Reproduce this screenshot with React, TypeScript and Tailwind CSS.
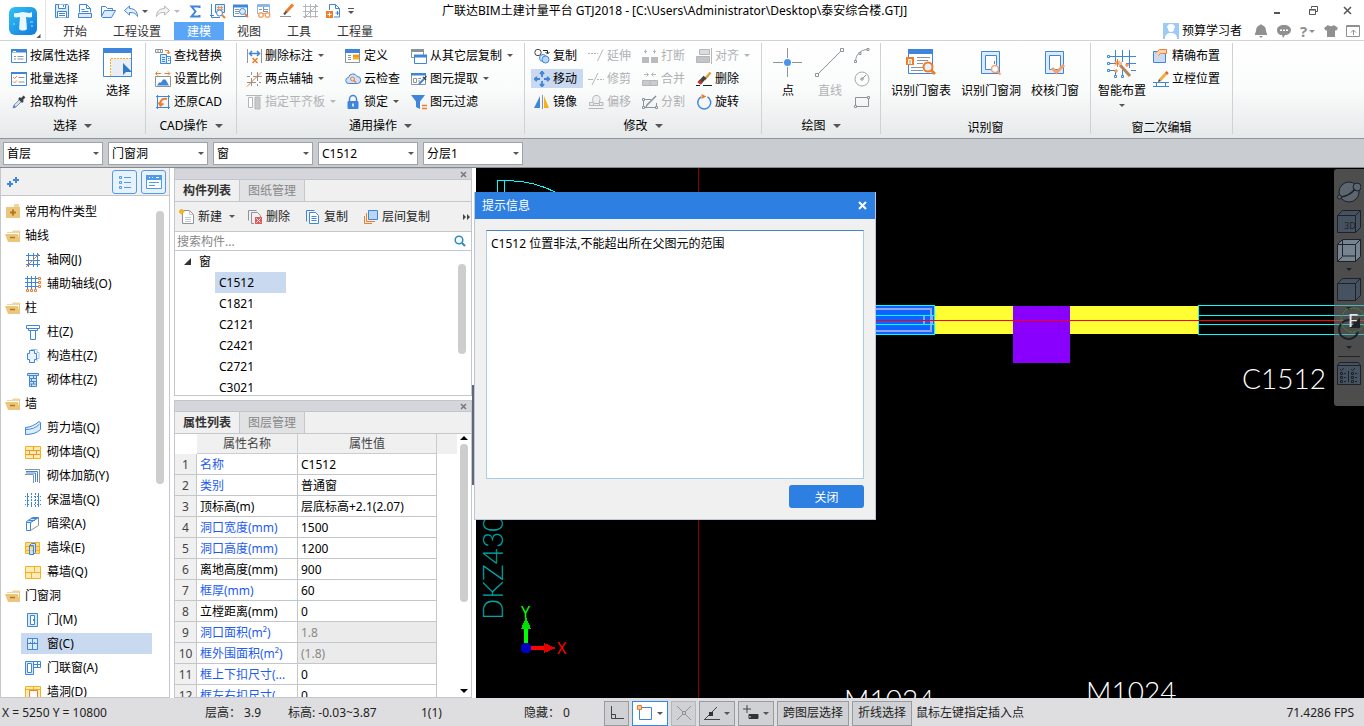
import React, { useState } from 'react';
import type { ReactNode } from 'react';
import { clsx } from 'clsx';

const B = '#3f86da';
const O = '#f07d2a';
const Y = '#f5b21a';
const G = '#8b949b';
const L = '#b4b7ba';

const icons: Record<string, ReactNode> = {
  // quick access bar
  save: (
    <g stroke={B}>
      <path d="M1.5 1.5h12l1 1v12h-13z" fill="#dcebfc" />
      <path d="M4.5 1.5v4h7v-4M9.5 2v2M3.5 14.5v-6h9v6M5 10.5h6M5 12.5h6" fill="#fff" />
    </g>
  ),
  sheet: (
    <g stroke={B}>
      <path d="M2.5 9.5v-8h7l4 4v4" />
      <path d="M9.5 1.5v4h4M4.5 6.5h3M4.5 8.5h7" />
      <path d="M1.5 10.5h13v4h-13z" fill="#dcebfc" />
    </g>
  ),
  open: (
    <g stroke={B}>
      <path d="M1.5 13.5v-10h4l2 2h5v2" />
      <path d="M1.5 13.5l3-6h11l-4 7h-9z" fill="#dcebfc" />
    </g>
  ),
  undo: <path d="M6.500 3L1.500 7.500l5 4.500V9.500c4 0 6 .5 8 4 0-5-3-8-8-8z" stroke={B} fill="#e6f0fd" />,
  redo: <path d="M9.500 3l5 4.500-5 4.500V9.500c-4 0-6 .5-8 4 0-5 3-8 8-8z" stroke="#b5b5b5" fill="#f3f3f3" />,
  sigma: <path d="M12.500 5V3.500h-8l4 5-4 5h8V12" stroke={B} strokeWidth="2" />,
  drawFind: (
    <g stroke={B}>
      <path d="M1.500 1v13.500H10M0 12.500h4" />
      <path d="M5.500 1.500h9v8h-9z" fill="#dcebfc" />
      <path d="M7 4.500h6M7 6.500h6M8.500 3v5M11.500 3v5" stroke="#e39a66" />
      <circle cx="9.500" cy="10" r="3" fill="#fff" />
      <path d="M12 12l3 3" stroke={O} strokeWidth="2" />
    </g>
  ),
  tableFind: (
    <g stroke={B}>
      <path d="M.5 2.500h14v11H.5z" fill="#fff" />
      <path d="M0 3h15" strokeWidth="3" />
      <path d="M2 6.500h4M2 8.500h4M2 10.500h4" stroke={G} />
      <circle cx="9.500" cy="8.500" r="3" fill="#dcebfc" />
      <path d="M12 11l3 3" stroke={O} strokeWidth="2" />
    </g>
  ),
  tableView: (
    <g stroke="#8cb7ea">
      <path d="M1.500 1.500h12v9h-12z" fill="#fff" />
      <path d="M1 3h13" strokeWidth="2" />
      <path d="M3 6.500h3M8 6.500h4M8 8.500h4M7.500 4v5" stroke={G} />
      <circle cx="5" cy="12" r="2.300" stroke="#f4a56c" strokeWidth="1.500" fill="#fff" />
      <circle cx="11.500" cy="12" r="2.300" stroke="#f4a56c" strokeWidth="1.500" fill="#fff" />
    </g>
  ),
  brush: (
    <g>
      <path d="M14 1.500L7 9" stroke={O} strokeWidth="3" />
      <path d="M7.500 8.500L5 11.500" stroke="#555" strokeWidth="2" />
      <path d="M1 13.500h11" stroke={G} />
    </g>
  ),
  gridGray: (
    <g stroke={L}>
      <path d="M3.500 1v14M8.500 1v14M13.500 1v14M1 3.500h15M1 8.500h15M1 13.500h15M2 15L15 2" />
    </g>
  ),
  docPlus: (
    <g stroke={B}>
      <path d="M4.500 7v-5.500h6l4 4v8.500H9" fill="#fff" />
      <path d="M10.500 1.500v4h4" />
      <path d="M1 8h7v7H1z" fill={O} stroke="none" />
      <path d="M4.500 9.500v4M2.500 11.500h4" stroke="#fff" />
      <path d="M12.500 8v4M10.500 10h4" />
    </g>
  ),
  // ribbon, 选择
  byProp: (
    <g stroke={B}>
      <path d="M.5 1.500h15v13H.5z" fill="#fff" />
      <path d="M0 3h16" strokeWidth="3" />
      <path d="M2 3.500h3" stroke="#fff" />
      <path d="M3 8.500h2M6.500 8.500h6M3 11h2M6.500 11h6" stroke={G} />
    </g>
  ),
  batch: (
    <g stroke={B}>
      <path d="M.5 1.500h15v13H.5z" fill="#fff" />
      <path d="M0 2h16" strokeWidth="2" />
      <path d="M7.500 6.500h6M7.500 11h6" stroke={G} />
      <path d="M2 6l1.500 1.500L6 5M2 10.500L3.500 12 6 9.500" stroke={O} />
    </g>
  ),
  dropper: (
    <g>
      <path d="M2 14l1-3 6-6 2 2-6 6z" fill="#cfe2f7" stroke={G} />
      <path d="M2 14l1-3 2 2z" fill={B} />
      <path d="M8 4l4 4M10 6l3.500-3.500" stroke="#3d4348" strokeWidth="2.500" />
    </g>
  ),
  replace: (
    <g stroke={B}>
      <path d="M.5 1.500h7v3h-7zM3 1.500v3M5.500 1.500v3" stroke={G} />
      <path d="M10 2.500h3.500V5M12 4l1.500 2L15 4" stroke={O} />
      <path d="M5.500 6.500h6v9h-6z" fill="#dcebfc" />
      <path d="M11.500 8.500h4v7h-4M7 9.500h3M7 11.500h3M7 13.500h3M13 10.500h1.500M13 12.500h1.500" />
    </g>
  ),
  ratio: (
    <g>
      <path d="M1 2.500h5M2.500.5l-2 2 2 2M9.500 2.500h5M13 .5l2 2-2 2" stroke={O} />
      <path d="M.5 5.500h15v10H.5z" stroke={G} fill="#fff" />
      <path d="M2 14.500l2-3 2 0 2-3 2.500 0 3.500 6z" fill={B} />
    </g>
  ),
  restore: (
    <g stroke={B}>
      <path d="M2.500 1v14M13.500 1v14M1 2.500h14M1 13.500h14" />
      <path d="M12 5c-4-1-7 1-6.500 5M3.500 8.500l2 3 3-2" stroke={O} strokeWidth="2" />
    </g>
  ),
  // ribbon, 通用操作
  delDim: (
    <g stroke={B}>
      <path d="M1.500 1v14M15.500 1v14" stroke={G} />
      <path d="M4 5.500h9M6 3L3.500 5.500 6 8M11 3l2.500 2.500L11 8" strokeWidth="1.500" />
      <path d="M6.500 10l5 5M11.500 10l-5 5" stroke={O} strokeWidth="1.500" />
    </g>
  ),
  twoPoint: (
    <g stroke={G}>
      <path d="M5.500 1v14M11.500 1v14M1 5.500h15M1 11.500h14" />
      <path d="M4 4h3v3H4zM10 10h3v3h-3z" fill="#fff" stroke="none" />
      <path d="M1 15.500L15 1.500" stroke={O} />
    </g>
  ),
  flush: (
    <g stroke={L}>
      <path d="M0 1.500h16" />
      <path d="M2.500 3.500h4v10h-4z" fill="#fff" />
      <path d="M9 3h5v12H9z" fill="#c6c8ca" />
    </g>
  ),
  define: (
    <g>
      <path d="M.5 2.500h14v12H.5z" stroke={G} fill="#fff" />
      <path d="M0 1h15v4H0z" fill={B} />
      <path d="M3 7.500h3M3 9.500h3M3 11.500h3" stroke={G} />
      <path d="M8 6.500h6v5H8z" fill={Y} />
      <path d="M8 8h6" stroke={O} />
    </g>
  ),
  cloud: (
    <g>
      <path d="M4 12.500a3 3 0 0 1-.5-6 4.500 4.500 0 0 1 8.500-1 3.500 3.500 0 0 1 .5 7z" fill="#cfe2f8" stroke={B} />
      <circle cx="7.500" cy="8" r="2" stroke={O} />
      <path d="M9 9.500l2 2" stroke={O} strokeWidth="1.500" />
    </g>
  ),
  lock: (
    <g>
      <path d="M4.500 8V5a3.500 3.500 0 0 1 7 0v3" stroke={B} strokeWidth="1.500" />
      <rect x="2.500" y="7" width="11" height="8" rx="1" fill={B} />
      <path d="M8 9.500v3" stroke="#fff" strokeWidth="1.500" />
    </g>
  ),
  fromFloor: (
    <g>
      <path d="M.5 1.500h12v8H.5z" stroke={G} fill="#fff" />
      <path d="M0 1h13v3H0z" fill={G} />
      <path d="M3.500 7.500h12v8h-12z" stroke={B} fill="#fff" />
      <path d="M3 6.500h13v3H3z" fill={B} />
    </g>
  ),
  extract: (
    <g>
      <path d="M.5 2.500h14v11H.5z" stroke={G} fill="#fff" />
      <path d="M0 2h15v2.500H0z" fill={B} />
      <path d="M2.500 7.500h3v4h-3zM7 7.500h3M7 10h2" stroke={G} />
      <path d="M8 13l5-5" stroke={B} strokeWidth="2" />
      <path d="M12 6l3 3M13.500 7.500L15.500 5" stroke="#3d4348" strokeWidth="1.500" />
    </g>
  ),
  filter: (
    <g>
      <path d="M0 1h14L9 7.500V15l-4-2V7.500z" fill={B} />
      <path d="M11 11.500h5M11 14.500h5" stroke={O} strokeWidth="1.500" />
    </g>
  ),
  // ribbon, 修改
  copy2: (
    <g>
      <circle cx="4" cy="4.500" r="3.200" stroke="#444" />
      <path d="M9 2.500h4.500V5M11.500 4l2 2 2-2" stroke="#222" />
      <circle cx="9" cy="10" r="3.500" stroke={B} fill="#dcebfc" />
      <circle cx="11.500" cy="11.500" r="3.500" stroke={B} fill="#b9d8f8" />
    </g>
  ),
  move: (
    <path
      d="M8 1v5M8 10v5M1 8h5M10 8h5M6 3l2-2.500L10 3M6 13l2 2.500 2-2.500M3 6L.5 8 3 10M13 6l2.500 2-2.500 2"
      stroke={B}
      strokeWidth="1.800"
    />
  ),
  mirror: (
    <g>
      <path d="M6 2v12H0z" fill={B} />
      <path d="M8.500 1v14" stroke={G} />
      <path d="M10 2v12h5z" fill={Y} />
    </g>
  ),
  extend: (
    <g stroke={L}>
      <path d="M0 5.500h10" strokeDasharray="2 1" />
      <path d="M9.500 13L15 1.500" />
    </g>
  ),
  trim: (
    <g stroke={L}>
      <path d="M0 8.500h5M4 14L10 2" />
      <path d="M9 8.500h7" strokeDasharray="2 1" />
    </g>
  ),
  offset: (
    <g stroke={L}>
      <path d="M1.500 11.500v-3h4C3 4 6 1 9 1.500s4 3 2 7h4v3z" fill="#efefef" />
      <path d="M.5 14.500h15M5.500 11V9.500h6V11" />
    </g>
  ),
  cut: (
    <g stroke={L}>
      <path d="M3.500 1.500v4M2 3.500h3M12.500 1.500v4M11 3.500h3" />
      <path d="M0 9h7v6H0zM9 9h7v6H9z" fill="#b9bbbd" stroke="none" />
    </g>
  ),
  join: (
    <g stroke={L}>
      <path d="M2 3.500h4M4.500 1.500l2 2-2 2M10 3.500h4M11.500 1.500l-2 2 2 2" />
      <path d="M.5 9.500h15v5H.5z" fill="#c9cbcd" />
      <path d="M8 9v6" />
    </g>
  ),
  split: (
    <g stroke={G}>
      <path d="M1.500 14.500v-9H9M0 13.500h16M14.500 9v6" />
      <path d="M14 2L5 11l-1 2" strokeWidth="1.500" />
      <path d="M.5 4.500h2v2h-2zM.5 12.500h2v2h-2zM13.500 12.500h2v2h-2z" fill="#fff" />
    </g>
  ),
  align: (
    <g stroke={L}>
      <path d="M3.500 1.500h10v5h-10z" fill="#ddd" />
      <path d="M.5 8.500h13v6H.5z" fill="#c3c5c7" />
      <path d="M15.500 0v16" />
    </g>
  ),
  erase: (
    <g>
      <path d="M14.500 1.500l-6 7" stroke="#e29a3c" strokeWidth="2.500" />
      <path d="M9 6L3.500 12" stroke="#444" strokeWidth="4" />
      <path d="M5 10l-2 2.500" stroke="#c0392b" strokeWidth="4" />
      <path d="M0 14.500h4M7 14.500h9" stroke="#222" />
    </g>
  ),
  rotate: (
    <g>
      <path d="M5 2.800a6.500 6.500 0 1 0 6.500 0" stroke={B} strokeWidth="1.500" />
      <path d="M5.500 0v5l5-2.500z" fill={O} />
    </g>
  ),
  arc: (
    <g stroke={G}>
      <path d="M1.500 13C2 6 7 2 13 1.500" />
      <path d="M.5 12.500h2v2h-2zM5 4.500h2v2H5zM13 .5h2v2h-2z" fill="#fff" />
    </g>
  ),
  circle: (
    <g stroke={G}>
      <circle cx="8" cy="8" r="7" stroke="#a5a9ad" />
      <path d="M8 8l4-4" />
      <path d="M7 7h2v2H7z" fill="#fff" />
    </g>
  ),
  rect: (
    <g stroke={G}>
      <path d="M1.500 3.500h13v9h-13z" />
      <path d="M.5 11.500h2v2h-2zM13.500 2.500h2v2h-2z" fill="#fff" />
    </g>
  ),
  precise: (
    <g>
      <path d="M.5 3.500h12v11H.5z" stroke={B} fill="#c9daf2" />
      <path d="M2.500 5l4-3.500h7v4h-4l-2 0-2 2" fill="#fbd3b2" stroke={O} />
    </g>
  ),
  frame: (
    <g>
      <path d="M0 11.500h16M0 15.500h16M3.500 11v5M12.500 11v5" stroke={B} />
      <path d="M14.500 1L7 9" stroke="#f2ae3c" strokeWidth="3" />
      <path d="M6 8l2 2-3 1z" fill="#444" />
      <path d="M13 1l2 2" stroke="#e2584c" strokeWidth="2" />
    </g>
  ),
  // element tree
  folderPlus: (
    <g>
      <path d="M9 0h5v3H9z" fill="#f3d59a" />
      <path d="M1 3h14v11H1z" fill="#ecc67e" />
      <path d="M8 5.500v6M5 8.500h6" stroke="#b07b1c" strokeWidth="2" />
    </g>
  ),
  folder: (
    <g>
      <path d="M2 5h12V2.500H8L7 4H2z" fill="#f3d59a" />
      <path d="M14.500 3v11" stroke="#ecc67e" />
      <path d="M0 6h13l2 8H3z" fill="#ecc67e" />
      <path d="M5 9.500h5" stroke="#b07b1c" strokeWidth="1.500" />
    </g>
  ),
  axis: (
    <g stroke={B}>
      <path d="M3.500 1v14M8.500 1v14M12.500 1v14M1 3.500h14M1 8.500h14M1 12.500h14" />
      <path d="M1 15L14 2" stroke={O} />
    </g>
  ),
  auxAxis: (
    <g stroke={B}>
      <path d="M2.500 0v13M6.500 0v13M10.500 0v13M0 2.500h13M0 6.500h13M0 10.500h13" />
      <path
        d="M13.500 1.500h2v2h-2zM13.500 5.500h2v2h-2zM13.500 9.500h2v2h-2zM1.500 13.500h2v2h-2zM5.500 13.500h2v2h-2zM9.500 13.500h2v2h-2z"
        stroke={O}
        fill="#fff"
      />
    </g>
  ),
  column: <path d="M1.500 1.500h13v3h-13zM3.500 4.500v2h9v-2M5.500 6.500v9h5v-9" stroke={B} fill="#fff" />,
  conColumn: (
    <g stroke={B}>
      <path d="M6 1.500h6v3h2v6h-2v3" stroke="#9cc3ee" />
      <path d="M4.500 2.500h5v3h2v6h-2v3h-5v-3h-2v-6h2z" fill="#eaf3fd" />
    </g>
  ),
  brickColumn: (
    <g stroke={B}>
      <path d="M2.500 1.500h11v2h-11z" fill="#cfe2f8" />
      <path d="M4.500 3.500h7v11h-7z" fill="#cfe2f8" />
      <path d="M5 6.500h6M5 9.500h6M5 12h6M8.500 4v2M6.500 7v2M8.500 10v2M6.500 12v2" />
    </g>
  ),
  shearWall: (
    <path d="M.5 7.500C6 7 10 5 14 1.500l1.500 1v7C12 13 7 14.500.5 14.500zM.5 9.500c6 0 11-2 14-5.500" stroke={B} fill="#dcebfc" />
  ),
  brickWall: (
    <g stroke={Y}>
      <path d="M.5 2.500h15v12H.5z" fill="#fdeab8" />
      <path d="M1 6.500h14M1 10.500h14M8.500 3v3M4.500 7v3M11.500 7v3M8.500 11v3" stroke="#f09a1a" />
    </g>
  ),
  brickBar: (
    <g>
      <path d="M0 1.500h14.500V15M0 6.500h8.500V15" stroke={G} />
      <path d="M1 3.500h11.500V14M1 5h9.500v9" stroke={B} />
    </g>
  ),
  insulWall: (
    <g stroke={B}>
      <path d="M2.500 1v14M13.500 1v14" />
      <path d="M6.500 1v14M10.500 1v14" strokeDasharray="2 1" />
      <path d="M0 4.500h16M0 8.500h16M0 12.500h16" strokeDasharray="1 2" />
    </g>
  ),
  darkBeam: (
    <g stroke={B}>
      <path d="M5.500 6.500l8-5v8l-8 5z" fill="#fff" stroke={G} />
      <path d="M1.500 5.500l6-4h6l-8 5h-4z" fill="#cfe2f8" />
      <path d="M1.500 6.500h4v8h-4z" fill="#fff" />
      <path d="M4 4.500h6M6 2.500h6" />
    </g>
  ),
  pier: (
    <g>
      <path d="M.5 2.500h14v11H.5z" fill="#fdd98a" stroke={Y} />
      <path d="M1 6.500h14M1 10.500h14" stroke={Y} />
      <path d="M4.500 5.500h4v9h-4zM8.500 14.500l2-2v-9h-4l-2 2" stroke={B} fill="#cfe2f8" />
    </g>
  ),
  curtain: (
    <g stroke={Y}>
      <path d="M.5 2.500h15v12H.5z" fill="#fdeab8" />
      <path d="M1 8.500h14M9.500 3v5M6.500 9v5" />
    </g>
  ),
  door: (
    <g stroke={B}>
      <path d="M2.500 1.500h10v13h-10z" fill="#dcebfc" />
      <path d="M5.500 3.500h4v9h-4z" fill="#fff" />
      <path d="M8.500 7v2" />
    </g>
  ),
  window: (
    <g stroke={B}>
      <path d="M2.500 2.500h10v11h-10z" fill="#dcebfc" />
      <path d="M7.500 3v10M3 7.500h9M5 6.500h1M9 6.500h1" />
    </g>
  ),
  doorWindow: (
    <g stroke={B}>
      <path d="M.5 1.500h8v13h-8z" fill="#dcebfc" />
      <path d="M2.500 3.500h4v9h-4z" fill="#fff" />
      <path d="M8.500 1.500h7v6h-7zM12.500 2v5M9 4.500h6" />
    </g>
  ),
  wallHole: (
    <g stroke={Y}>
      <path d="M.5 2.500h15v13H.5z" fill="#fdeab8" />
      <path d="M1 5.500h14M8.500 3v2" />
      <path d="M4.500 6.500h8v9h-8z" stroke={O} fill="#fff" />
    </g>
  ),
  // component list bar
  newDoc: (
    <g>
      <path d="M3.500 1.500h7l4 4v9h-11z" stroke={G} fill="#fff" />
      <path d="M10.500 1.500v4h4M6 8.500h6M6 10.500h6M6 12.500h6" stroke="#c3c8cc" />
      <path d="M1 1h1v1H1zM3 1h1v1H3zM2 2h1v1H2zM1 3h1v1H1zM3 3h1v1H3zM0 2h1v1H0zM4 2h1v1H4zM2 0h1v1H2zM2 4h1v1H2z" stroke={Y} />
    </g>
  ),
  delDoc: (
    <g>
      <path d="M1.500 11.500v-10h8" stroke={G} />
      <path d="M4.500 14.500v-11h6l3 3v3M7 14.500H4.500" stroke={G} />
      <path d="M8 8h7v7H8z" fill="#e05a5a" />
      <path d="M9.500 9.500l4 4M13.500 9.500l-4 4" stroke="#fff" />
    </g>
  ),
  copyDoc: (
    <g stroke={B}>
      <path d="M1.500 12.500v-11h8" />
      <path d="M4.500 3.500h6l3 3v8h-9z" fill="#fff" />
      <path d="M6.500 7.500h5M6.500 9.500h5M6.500 11.500h5" />
    </g>
  ),
  layerCopy: (
    <g>
      <path d="M5.500 1.500h9v9h-9z" fill="#b9d5f8" stroke={B} />
      <path d="M3.500 4v8.500H12M1.500 7v7.500H9" stroke={O} />
    </g>
  ),
  // status bar
  ortho: <path d="M2.500 1v12.500H15M2.500 9.500h4v4" stroke="#444" />,
  snapRect: (
    <g>
      <path d="M2.500 2.500h12v12h-12z" stroke={B} />
      <path d="M.5 .5h4v4h-4z" fill="#f9c293" stroke={O} />
    </g>
  ),
  cross: (
    <g stroke="#8f9092">
      <path d="M1 1l14 14M15 1L1 15" />
      <path d="M6.500 6.500h3v3h-3z" fill="#ccc" />
    </g>
  ),
  angle: (
    <g>
      <path d="M0 14.500h16M1 14L13 2" stroke="#444" />
      <path d="M5 7h4v4H5z" fill="#333" />
    </g>
  ),
  inputXY: (
    <g>
      <path d="M4 0v8M0 4h8" stroke="#444" />
      <path d="M6 9.500h9v4H6z" fill="#333" stroke="#333" />
      <path d="M7 11v1.500" stroke="#fff" />
    </g>
  ),
};

const Icon = ({ name, size = 16 }: { name: string; size?: number }) => (
  <svg width={size} height={size} viewBox="0 0 16 16" fill="none" className="shrink-0" aria-hidden="true">
    {icons[name]}
  </svg>
);

const bigIcons: Record<string, ReactNode> = {
  select: (
    <g>
      <path d="M.5.5h28v28H.5z" fill="#fff" stroke={B} />
      <path d="M0 0h29v5H0z" fill={B} />
      <path d="M8 11h20v17H8z" fill="#e9eef6" />
      <path d="M7.500 28V10.500H28" stroke={Y} strokeDasharray="2 1" />
      <path d="M20 15v12l3-3h6z" fill="#2f79c9" />
    </g>
  ),
  point: (
    <g>
      <path d="M14.500 0v29M0 14.500h29" stroke={G} />
      <circle cx="14.500" cy="14.500" r="4.500" fill="#fff" />
      <circle cx="14.500" cy="14.500" r="3.500" fill="#4a94ec" />
    </g>
  ),
  line: (
    <g stroke={G}>
      <path d="M3 26L26 3" />
      <path d="M.5 25.500h3v3h-3zM25.500.5h3v3h-3z" fill="#fff" />
    </g>
  ),
  winTable: (
    <g>
      <path d="M2.500 1.500h24v24h-24z" fill="#fff" stroke={B} />
      <path d="M2 1h25v5H2z" fill={B} />
      <path d="M11 9.500h13M11 12.500h11M11 15.500h6M5 19.500h12M5 22.500h12" stroke={G} />
      <path d="M0 9h8v8H0z" fill={O} />
      <path d="M2.500 16v-4.500h3V16M4 12v4" stroke="#fff" />
      <circle cx="22" cy="19" r="4.500" fill="#e9f1fb" stroke={O} strokeWidth="2" />
      <path d="M25.500 22.500l3.500 3.500" stroke={O} strokeWidth="3" />
    </g>
  ),
  winHole: (
    <g>
      <path d="M5.500 3.500h18v22h-18z" fill="#dcebfc" stroke={B} />
      <path d="M9.500 7.500h11v14h-11z" fill="#fff" stroke={B} />
      <path d="M18.500 13v3" stroke={B} />
      <circle cx="19" cy="21" r="3.500" fill="#fff" stroke="#f7a06a" strokeWidth="1.500" />
      <path d="M21.500 23.500l3 3" stroke="#f7a06a" strokeWidth="2" />
    </g>
  ),
  winCheck: (
    <g>
      <path d="M5.500 3.500h18v22h-18z" fill="#dcebfc" stroke={B} />
      <path d="M9.500 7.500h11v14h-11z" fill="#fff" stroke={B} />
      <path d="M12 20l4.500 4.500L24 17" stroke="#f7a06a" strokeWidth="3" />
    </g>
  ),
  smart: (
    <g>
      <path d="M8.500 2v12M15.500 2v12M22.500 2v18M3 8.500h26M3 15.500h6M3 22.500h5M19 15.500h10M24 22.500h5M8.500 24v3M15.500 22v5" stroke={B} />
      <path d="M.5 7.500h2v2h-2zM.5 14.500h2v2h-2zM.5 21.500h2v2h-2zM7.500 27.500h2v2h-2zM14.500 27.500h2v2h-2z" stroke={B} fill="#fff" />
      <path d="M13 17l10 11" stroke="#b9835a" strokeWidth="3" />
      <path d="M10.500 11v8M7 15h8M8 12.500l5 5M13 12.500l-5 5M20 15v4M18 17h4M9 21v4M7 23h4" stroke={O} />
    </g>
  ),
};

const Caret = ({ className = 'border-t-[#555]' }: { className?: string }) => (
  <span className={clsx('h-0 w-0 shrink-0 border-x-[3px] border-t-[3px] border-x-transparent', className)} />
);

function Tool({ icon, label, caret, off, active }: { icon: string; label: string; caret?: boolean; off?: boolean; active?: boolean }) {
  return (
    <button
      className={clsx(
        'my-[2px] flex h-[19px] w-max items-center gap-[3px] whitespace-nowrap pl-[3px] pr-[6px]',
        off && 'text-[#b0b2b5]',
        active && 'bg-[#c8d9f0]',
      )}
    >
      <Icon name={icon} />
      {label}
      {caret && <span className="ml-[2px] flex"><Caret className={off ? 'border-t-[#b5b5b5]' : 'border-t-[#555]'} /></span>}
    </button>
  );
}

const ToolColumn = ({ className, children }: { className?: string; children: ReactNode }) => (
  <div className={clsx('flex shrink-0 flex-col items-start', className)}>{children}</div>
);

function BigTool({ icon, label, className, off, caret }: { icon: string; label: string; className?: string; off?: boolean; caret?: boolean }) {
  return (
    <button className={clsx('flex flex-col items-center whitespace-nowrap pt-1', off && 'text-[#b0b2b5]', className)}>
      <svg width="30" height="30" viewBox="0 0 30 30" fill="none" aria-hidden="true">{bigIcons[icon]}</svg>
      <span className="h-6 leading-[26px]">{label}</span>
      {caret && <Caret className="mt-[2px] border-t-[#555]" />}
    </button>
  );
}

function Group({ title, caret, className, body, children }: { title: string; caret?: boolean; className: string; body: string; children: ReactNode }) {
  return (
    <section className={clsx('mb-1 mt-[2px] flex shrink-0 flex-col border-r border-[#cfd2d4]', className)}>
      <div className={clsx('flex min-h-0 flex-1 items-start pt-px', body)}>{children}</div>
      <div className={clsx('flex items-center justify-center gap-[7px]', caret ? 'h-4' : 'h-3')}>
        {title}
        {caret && <span className="h-0 w-0 border-x-4 border-t-4 border-x-transparent border-t-[#555]" />}
      </div>
    </section>
  );
}

const quick = ['save', 'sheet', 'open', 'undo', 'redo', 'sigma', 'drawFind', 'tableFind', 'tableView', 'brush', 'gridGray', 'docPlus'];
const tabs = ['开始', '工程设置', '建模', '视图', '工具', '工程量'];

function Header() {
  const [tab, setTab] = useState('建模');
  return (
    <header className="flex h-[41px] shrink-0 border-b border-[#d0d2d4] bg-white">
      <button className="w-[46px] shrink-0 border-r border-[#e4e4e4] pl-[9px] pt-[6px]" aria-label="T">
        <svg width="32" height="32" viewBox="0 0 32 32" aria-hidden="true">
          <defs>
            <linearGradient id="logo" x1="0" y1="0" x2="1" y2="1">
              <stop offset="0" stopColor="#2fc3f5" />
              <stop offset="1" stopColor="#1277dd" />
            </linearGradient>
          </defs>
          <rect width="28" height="28" rx="6" fill="url(#logo)" />
          <path d="M5 6c3 1 6-1 9-1s6 2 9 0v5c-2 1-4 0-6 0l1 12c-2 2-6 2-8 0l1-12c-2 0-4 1-6 0z" fill="#e9f7ff" />
          <path d="M4 17h2M21 15h3M22 19h2" stroke="#9fe0ff" />
          <path d="M31.500 27v4h-4z" fill="#555" />
        </svg>
      </button>
      <div className="flex min-w-0 flex-1 flex-col">
        <div className="flex h-[22px] items-center">
          <div className="flex w-[396px] shrink-0 items-center gap-[7px] pl-2">
            {quick.map((name) => (
              <button key={name} aria-label={name} className={clsx('flex items-center', (name === 'undo' || name === 'redo') && 'w-[25px] gap-[3px]')}>
                <Icon name={name} />
                {name === 'undo' && <Caret />}
                {name === 'redo' && <Caret className="border-t-[#bbb]" />}
              </button>
            ))}
            <button aria-label="more" className="flex flex-col gap-[2px]">
              <span className="h-px w-[6px] bg-[#555]" />
              <Caret />
            </button>
          </div>
          <h1 className="truncate">广联达BIM土建计量平台 GTJ2018 - [C:\Users\Administrator\Desktop\泰安综合楼.GTJ]</h1>
          <svg className="ml-auto mr-[12px] shrink-0" width="78" height="12" viewBox="0 0 78 12" fill="none" stroke="#555" aria-hidden="true">
            <path d="M0 8h6" strokeWidth="2" />
            <path d="M37.500 3.500v-2h6v5h-2M35.500 4.500h6v5h-6zM35 5h7" />
            <path d="M70 2l7 7M77 2l-7 7" strokeWidth="1.500" />
          </svg>
        </div>
        <div className="flex h-[18px] items-center">
          <nav className="flex pl-1">
            {tabs.map((t) => (
              <button
                key={t}
                onClick={() => setTab(t)}
                className={clsx('h-[18px] px-[13px] leading-5', t === tab ? 'bg-[#5ba5f7] text-white' : 'text-[#333]')}
              >
                {t}
              </button>
            ))}
          </nav>
          <div className="ml-auto flex items-center gap-2 pr-1 text-[#909090]">
            <a href="#user" className="mr-1 flex items-center gap-[3px] text-black">
              <svg width="16" height="16" viewBox="0 0 16 16" aria-hidden="true">
                <path d="M0 0h16v16H0z" fill="#9ccbfa" />
                <circle cx="8" cy="6" r="3" fill="#fff" />
                <path d="M4 5a4 4 0 0 1 8 0zM2 16c0-4 2-6 6-6s6 2 6 6z" fill="#fff" />
              </svg>
              预算学习者
            </a>
            <svg width="14" height="14" viewBox="0 0 14 14" fill="currentColor" aria-hidden="true">
              <path d="M7 0l1 1c3 1 4 3 4 6l1 3v1H1v-1l1-3c0-3 1-5 4-6zM5 12h4l-2 2z" />
            </svg>
            <svg width="16" height="14" viewBox="0 0 16 14" aria-hidden="true">
              <path d="M8 1c4 0 7 2 7 5s-3 5-6 5l-2 3-1-3C3 11 1 9 1 6s3-5 7-5z" fill="currentColor" />
              <path d="M4 5.500h2v1.500H4zM7 5.500h2v1.500H7zM10 5.500h2v1.500h-2z" fill="#fff" />
            </svg>
            <button className="flex w-4 items-center gap-[2px] text-[15px] font-bold leading-4" aria-label="help">
              ?<Caret className="border-t-[#909090]" />
            </button>
            <svg width="14" height="14" viewBox="0 0 14 14" fill="currentColor" aria-hidden="true">
              <path d="M4 1c1 1.500 5 1.500 6 0l4 3-2 3-1-1v7H3V6L2 7 0 4z" />
            </svg>
            <svg width="14" height="14" viewBox="0 0 14 14" fill="none" stroke="currentColor" aria-hidden="true">
              <path d="M.5 1.500h13v11H.5zM0 2.500h14M7.500 11V6M5 8.500L7.500 6 10 8.500" />
            </svg>
          </div>
        </div>
      </div>
    </header>
  );
}

function Ribbon() {
  return (
    <div className="flex h-[98px] shrink-0 overflow-hidden border-b border-[#8f9499] bg-gradient-to-b from-white via-[#fafbfb] to-[#e6e9ea]">
      <Group title="选择" caret className="w-[146px]" body="pl-2">
        <ToolColumn className="w-[90px]">
          <Tool icon="byProp" label="按属性选择" />
          <Tool icon="batch" label="批量选择" />
          <Tool icon="dropper" label="拾取构件" />
        </ToolColumn>
        <BigTool icon="select" label="选择" className="w-10" />
      </Group>
      <Group title="CAD操作" caret className="w-[91px]" body="pl-[6px]">
        <ToolColumn>
          <Tool icon="replace" label="查找替换" />
          <Tool icon="ratio" label="设置比例" />
          <Tool icon="restore" label="还原CAD" />
        </ToolColumn>
      </Group>
      <Group title="通用操作" caret className="w-[288px]" body="pl-[6px]">
        <ToolColumn className="w-[99px]">
          <Tool icon="delDim" label="删除标注" caret />
          <Tool icon="twoPoint" label="两点辅轴" caret />
          <Tool icon="flush" label="指定平齐板" caret off />
        </ToolColumn>
        <ToolColumn className="w-[66px]">
          <Tool icon="define" label="定义" />
          <Tool icon="cloud" label="云检查" />
          <Tool icon="lock" label="锁定" caret />
        </ToolColumn>
        <ToolColumn>
          <Tool icon="fromFloor" label="从其它层复制" caret />
          <Tool icon="extract" label="图元提取" caret />
          <Tool icon="filter" label="图元过滤" />
        </ToolColumn>
      </Group>
      <Group title="修改" caret className="w-[237px]" body="pl-[6px]">
        <ToolColumn className="w-[54px]">
          <Tool icon="copy2" label="复制" />
          <Tool icon="move" label="移动" active />
          <Tool icon="mirror" label="镜像" />
        </ToolColumn>
        <ToolColumn className="w-[54px]">
          <Tool icon="extend" label="延伸" off />
          <Tool icon="trim" label="修剪" off />
          <Tool icon="offset" label="偏移" off />
        </ToolColumn>
        <ToolColumn className="w-[54px]">
          <Tool icon="cut" label="打断" off />
          <Tool icon="join" label="合并" off />
          <Tool icon="split" label="分割" off />
        </ToolColumn>
        <ToolColumn>
          <Tool icon="align" label="对齐" off caret />
          <Tool icon="erase" label="删除" />
          <Tool icon="rotate" label="旋转" />
        </ToolColumn>
      </Group>
      <Group title="绘图" caret className="w-[119px]" body="pl-[5px]">
        <BigTool icon="point" label="点" className="w-[42px]" />
        <BigTool icon="line" label="直线" off className="w-[42px]" />
        <ToolColumn className="pl-[3px]">
          {['arc', 'circle', 'rect'].map((name) => (
            <button key={name} aria-label={name} className="flex h-[23px] items-center">
              <Icon name={name} />
            </button>
          ))}
        </ToolColumn>
      </Group>
      <Group title="识别窗" className="w-[210px]" body="pl-[5px]">
        <BigTool icon="winTable" label="识别门窗表" className="px-[5px]" />
        <BigTool icon="winHole" label="识别门窗洞" className="px-[5px]" />
        <BigTool icon="winCheck" label="校核门窗" className="px-[5px]" />
      </Group>
      <Group title="窗二次编辑" className="w-[142px]" body="pl-[3px]">
        <BigTool icon="smart" label="智能布置" caret className="w-14" />
        <ToolColumn>
          <Tool icon="precise" label="精确布置" />
          <Tool icon="frame" label="立樘位置" />
        </ToolColumn>
      </Group>
    </div>
  );
}

const selectors = [
  { name: '楼层', value: '首层' },
  { name: '类别', value: '门窗洞' },
  { name: '类型', value: '窗' },
  { name: '构件', value: 'C1512' },
  { name: '分层', value: '分层1' },
];

function SelectorBar() {
  return (
    <div className="flex h-[29px] shrink-0 items-center gap-[5px] border-b border-[#85888c] bg-[#c9ccd1] px-[3px]">
      {selectors.map((s) => (
        <label key={s.name} className="relative flex items-center">
          <select aria-label={s.name} defaultValue={s.value} className="h-[23px] w-[100px] appearance-none border border-[#9fa2a6] bg-white pl-[3px] pt-px leading-5 text-black outline-none">
            <option>{s.value}</option>
          </select>
          <span className="pointer-events-none absolute right-1 flex"><Caret /></span>
        </label>
      ))}
    </div>
  );
}

const tree = [
  { icon: 'folderPlus', label: '常用构件类型', root: true },
  { icon: 'folder', label: '轴线', root: true },
  { icon: 'axis', label: '轴网(J)' },
  { icon: 'auxAxis', label: '辅助轴线(O)' },
  { icon: 'folder', label: '柱', root: true },
  { icon: 'column', label: '柱(Z)' },
  { icon: 'conColumn', label: '构造柱(Z)' },
  { icon: 'brickColumn', label: '砌体柱(Z)' },
  { icon: 'folder', label: '墙', root: true },
  { icon: 'shearWall', label: '剪力墙(Q)' },
  { icon: 'brickWall', label: '砌体墙(Q)' },
  { icon: 'brickBar', label: '砌体加筋(Y)' },
  { icon: 'insulWall', label: '保温墙(Q)' },
  { icon: 'darkBeam', label: '暗梁(A)' },
  { icon: 'pier', label: '墙垛(E)' },
  { icon: 'curtain', label: '幕墙(Q)' },
  { icon: 'folder', label: '门窗洞', root: true },
  { icon: 'door', label: '门(M)' },
  { icon: 'window', label: '窗(C)' },
  { icon: 'doorWindow', label: '门联窗(A)' },
  { icon: 'wallHole', label: '墙洞(D)' },
];

function ElementTree() {
  const [current, setCurrent] = useState('窗(C)');
  return (
    <aside className="flex w-[170px] shrink-0 flex-col border-x border-b border-[#c3c6cb] bg-white">
      <div className="flex h-7 shrink-0 items-center gap-1 border-b border-[#c3c6cb] bg-[#f0f0f0] pl-[6px] pr-[3px]">
        <svg width="14" height="14" viewBox="0 0 14 14" stroke={B} strokeWidth="2" aria-hidden="true">
          <path d="M3 6v6M0 9h6M9 2v6M6 5h6" />
        </svg>
        <button aria-label="list" className="ml-auto flex h-6 w-[25px] items-center justify-center rounded-[3px] border border-[#4f9bea] bg-[#e8f2fd]">
          <svg width="14" height="14" viewBox="0 0 14 14" fill="none" stroke="#4f9bea" aria-hidden="true">
            <path d="M1.500 1.500h2v2h-2zM1.500 6.500h2v2h-2zM1.500 11.500h2v2h-2zM6 2.500h7M6 7.500h7M6 12.500h7" />
          </svg>
        </button>
        <button aria-label="panel" className="flex h-6 w-[25px] items-center justify-center rounded-[3px] border border-[#4f9bea] bg-[#e8f2fd]">
          <svg width="16" height="14" viewBox="0 0 16 14" fill="none" stroke="#4f9bea" aria-hidden="true">
            <path d="M.5.5h15v13H.5z" fill="#fff" />
            <path d="M0 0h16v5H0z" fill="#4f9bea" stroke="none" />
            <path d="M3 2.500h1M6 2.500h1M10 2.500h3" stroke="#fff" />
            <path d="M3 7.500h10M3 10.500h6" />
          </svg>
        </button>
      </div>
      <div className="relative min-h-0 flex-1 overflow-hidden">
        <ul className="pt-[3px]">
          {tree.map((item) => (
            <li key={item.label} className={clsx('flex h-6 items-center', item.root ? 'pl-[3px]' : 'pl-5')}>
              <button
                onClick={() => setCurrent(item.label)}
                className={clsx(
                  'flex h-[21px] items-center pt-px text-left',
                  item.root ? 'gap-1 pl-px' : 'w-[131px] gap-[6px] pl-1',
                  current === item.label && 'bg-[#c8d9f0]',
                )}
              >
                <Icon name={item.icon} />
                {item.label}
              </button>
            </li>
          ))}
        </ul>
        <span className="absolute right-[5px] top-[15px] h-[273px] w-2 rounded-full bg-[#cdcdcd]" />
      </div>
    </aside>
  );
}

function PanelHead({ active, other }: { active: string; other: string }) {
  return (
    <>
      <div className="flex h-3 shrink-0 items-center justify-end border-y border-[#c3c6cb] bg-[#d4d6db] pr-1">
        <svg width="7" height="7" viewBox="0 0 7 7" stroke="#777" strokeWidth="1.500" aria-hidden="true"><path d="M1 1l5 5M6 1L1 6" /></svg>
      </div>
      <div className="flex h-[22px] shrink-0 border-b border-[#c3c6cb] bg-[#f0f0f0]">
        <button className="w-[65px] border-r border-[#c3c6cb] font-bold text-[#333]">{active}</button>
        <button className="w-[65px] border-r border-[#c3c6cb] bg-[#e1e2e4] text-[#888]">{other}</button>
      </div>
    </>
  );
}

const components = ['C1512', 'C1821', 'C2121', 'C2421', 'C2721', 'C3021'];

function ComponentList() {
  return (
    <section className="flex h-[228px] shrink-0 flex-col border-x border-b border-[#c3c6cb] bg-white">
      <PanelHead active="构件列表" other="图纸管理" />
      <div className="flex h-[30px] shrink-0 items-center border-b border-[#c3c6cb] bg-[#f0f0f0] pl-1 text-[#222]">
        <button className="flex w-[68px] items-center gap-[3px]">
          <Icon name="newDoc" />新建<span className="ml-1 flex"><Caret /></span>
        </button>
        <button className="flex w-[58px] items-center gap-[3px]"><Icon name="delDoc" />删除</button>
        <button className="flex w-[58px] items-center gap-[3px]"><Icon name="copyDoc" />复制</button>
        <button className="flex items-center gap-[3px] whitespace-nowrap"><Icon name="layerCopy" />层间复制</button>
        <svg className="ml-auto" width="8" height="6" viewBox="0 0 8 6" fill="#444" aria-hidden="true"><path d="M0 0l3 3-3 3zM4 0l3 3-3 3z" /></svg>
      </div>
      <label className="flex h-[19px] shrink-0 items-center border-b border-[#c3c6cb] pl-[2px] pr-[5px]">
        <input aria-label="搜索构件" placeholder="搜索构件..." className="min-w-0 flex-1 pt-px outline-none placeholder:text-[#888]" />
        <svg width="12" height="12" viewBox="0 0 12 12" fill="none" stroke="#2b8ac6" aria-hidden="true">
          <circle cx="5" cy="5" r="3.800" strokeWidth="1.500" />
          <path d="M8 8l3 3" strokeWidth="2" />
        </svg>
      </label>
      <div className="relative min-h-0 flex-1 overflow-hidden">
        <div className="flex h-[21px] items-center gap-2 pl-[9px]">
          <svg width="7" height="7" viewBox="0 0 7 7" aria-hidden="true"><path d="M7 0v7H0z" fill="#333" /></svg>
          窗
        </div>
        {components.map((c, i) => (
          <button key={c} className={clsx('ml-10 block h-[21px] w-[71px] pl-1 text-left', i === 0 && 'bg-[#c8d9f0]')}>{c}</button>
        ))}
        <span className="absolute right-[5px] top-[13px] h-[90px] w-2 rounded-full bg-[#cdcdcd]" />
      </div>
    </section>
  );
}

const props = [
  { name: '名称', value: 'C1512', key: true },
  { name: '类别', value: '普通窗', key: true },
  { name: '顶标高(m)', value: '层底标高+2.1(2.07)' },
  { name: '洞口宽度(mm)', value: '1500', key: true },
  { name: '洞口高度(mm)', value: '1200', key: true },
  { name: '离地高度(mm)', value: '900' },
  { name: '框厚(mm)', value: '60', key: true },
  { name: '立樘距离(mm)', value: '0' },
  { name: '洞口面积(m²)', value: '1.8', key: true, locked: true },
  { name: '框外围面积(m²)', value: '(1.8)', key: true, locked: true },
  { name: '框上下扣尺寸(...', value: '0', key: true },
  { name: '框左右扣尺寸(...', value: '0', key: true },
];

function PropertyList() {
  return (
    <section className="flex min-h-0 flex-1 flex-col border-x border-b border-[#c3c6cb] bg-white">
      <PanelHead active="属性列表" other="图层管理" />
      <div className="flex min-h-0 flex-1 overflow-hidden">
        <div className="min-w-0 flex-1 overflow-hidden">
          <table className="w-full table-fixed border-separate border-spacing-0">
            <colgroup>
              <col className="w-[22px]" />
              <col className="w-[101px]" />
              <col className="w-[139px]" />
              <col />
            </colgroup>
            <thead>
              <tr className="h-5 text-[#444]">
                <th className="p-0" />
                <th className="border-b border-r border-[#c9ccd1] bg-[#f0f0f0] p-0 pt-px font-normal">属性名称</th>
                <th className="border-b border-r border-[#c9ccd1] bg-[#f0f0f0] p-0 pt-px font-normal">属性值</th>
                <th className="bg-[#f0f0f0] p-0" />
              </tr>
            </thead>
            <tbody>
              {props.map((p, i) => (
                <tr key={p.name} className="h-[21px]">
                  <td className="border-b border-r border-[#c3c6cb] bg-[#f0f0f0] p-0 pt-[2px] text-center text-[#444]">{i + 1}</td>
                  <td className={clsx('overflow-hidden whitespace-nowrap border-b border-r border-[#c3c6cb] p-0 pl-[3px] pt-[2px]', p.key && 'text-[#1d5cf0]')}>{p.name}</td>
                  <td className={clsx('overflow-hidden whitespace-nowrap border-b border-r border-[#c3c6cb] p-0 pl-[3px] pt-[2px]', p.locked && 'bg-[#ebebeb] text-[#888]')}>{p.value}</td>
                  <td className="p-0" />
                </tr>
              ))}
            </tbody>
          </table>
        </div>
        <div className="flex w-[14px] shrink-0 flex-col items-center gap-1 pb-1 pt-[2px]">
          <span className="h-0 w-0 border-x-4 border-b-4 border-x-transparent border-b-black" />
          <span className="h-[158px] w-2 rounded-full bg-[#cdcdcd]" />
          <span className="mt-auto h-0 w-0 border-x-4 border-t-4 border-x-transparent border-t-black" />
        </div>
      </div>
    </section>
  );
}

const Cube = ({ children, fill = '#46525f' }: { children?: ReactNode; fill?: string }) => (
  <svg width="24" height="24" viewBox="0 0 24 24" fill={fill} stroke="#1b2229" aria-hidden="true">
    <path d="M.5 5.500l5-5h18v17l-5 5H.5zM.5 5.500h18v17M18.500 5.500l5-5" />
    {children}
  </svg>
);

function ViewTools() {
  const caret = <Caret className="h-[5px]! border-t-[#1b2229]" />;
  return (
    <div className="absolute right-0 top-px flex h-[237px] w-[30px] flex-col items-center gap-[5px] rounded-l-[3px] bg-[#808080]/60 pt-3">
      <svg width="24" height="24" viewBox="0 0 24 24" fill="#5d6670" stroke="#1b2229" aria-hidden="true">
        <circle cx="12" cy="11" r="10" />
        <circle cx="20" cy="6" r="4" />
        <circle cx="2.500" cy="16" r="2" />
        <path d="M4 16c6-1 11-4 14-8" strokeWidth="1.500" fill="none" />
      </svg>
      <Cube>
        <text x="7" y="19" fontSize="9" fill="#1b2229" stroke="none">3D</text>
      </Cube>
      <Cube fill="#77838f"><path d="M5.500 1v16H18M5.500 17.500l-5 5" fill="none" /></Cube>
      {caret}
      <Cube />
      {caret}
      <svg width="24" height="24" viewBox="0 0 24 24" fill="none" stroke="#1b2229" strokeWidth="2" aria-hidden="true">
        <path d="M20 8a9.500 9.500 0 1 0 1 6" />
        <path d="M22 3v7h-7z" fill="#1b2229" />
      </svg>
      {caret}
      <span className="h-px w-[22px] shrink-0 bg-[#222]" />
      <svg width="24" height="24" viewBox="0 0 24 24" fill="none" stroke="#1b2229" aria-hidden="true">
        <path d="M.5 3.500l2-3h19l2 3v19H.5zM.5 3.500h23" fill="#46525f" />
        <path d="M3 7l1.500 1.500L7 6M14 7l1.500 1.500L18 6M11.500 9v11M3.500 10.500h2v2h-2zM3.500 14.500h2v2h-2zM3.500 18.500h2v2h-2zM14.500 10.500h2v2h-2zM14.500 14.500h2v2h-2zM14.500 18.500h2v2h-2zM7 11.500h2M7 15.500h2M7 19.500h2M18 11.500h2M18 15.500h2M18 19.500h2" />
      </svg>
    </div>
  );
}

function Drawing() {
  return (
    <div className="relative min-w-0 flex-1 overflow-hidden bg-black">
      <svg className="absolute inset-0 size-full" fill="none" shapeRendering="crispEdges" aria-hidden="true">
        <path d="M222.500 0v600" stroke="#8b0000" />
        <path d="M21.500 30V12.500H28.500V30M28 12.500q30 0 52 12" stroke="#00ffff" />
        {/* selected window */}
        <path d="M300 138h159v28H300z" fill="#0f62ff" />
        <path d="M300 141h155v22H300M448 147v10M456 147v10" stroke="#8ea8f8" strokeWidth="2" />
        <path d="M300 137.500h158.500v29H300M300 147.500h158M300 156.500h158" stroke="#00ffff" />
        {/* wall and column */}
        <path d="M459 138h263v28H459z" fill="#ffff33" />
        <path d="M537 138h57v57h-57z" fill="#8a00ff" />
        {/* window on the right */}
        <path d="M2000 137.500H722.500v29H2000M722 147.500h1300M722 156.500h1300" stroke="#00ffff" />
        <path d="M300 152.500h2000" stroke="#ff0000" />
        <g fontFamily="Lato" fontWeight="300" fontSize="28">
          <text x="766" y="221" fill="#fff">C1512</text>
          <text x="368" y="542" fill="#fff">M1024</text>
          <text x="610" y="534" fill="#fff">M1024</text>
          <text transform="translate(27 452) rotate(-90)" fill="#00a5a5">DKZ430</text>
        </g>
        <path d="M50 479v-20" stroke="#00ff00" strokeWidth="4" />
        <path d="M45 461l5-12 5 12z" fill="#00e000" />
        <path d="M50 480h20" stroke="#ff0000" strokeWidth="4" />
        <path d="M68 475l12 5-12 5z" fill="#e00000" />
        <circle cx="50" cy="480" r="5.500" fill="#0000c0" />
        <g fontFamily="Noto Sans" fontSize="16">
          <text x="45" y="450" fill="#00ff00">Y</text>
          <text x="81" y="486" fill="#ff0000">X</text>
        </g>
      </svg>
      <ViewTools />
      <svg className="absolute right-[-2px] top-[139px]" width="26" height="26" viewBox="0 0 26 26" fill="none" aria-hidden="true">
        <circle cx="13" cy="13" r="12" stroke="#3f8f46" strokeDasharray="3 1" />
        <text x="8" y="20" fontSize="18" fontFamily="Lato" fill="#e8e8e8">F</text>
      </svg>
    </div>
  );
}

function MessageDialog() {
  return (
    <div role="dialog" aria-label="提示信息" className="absolute left-[474px] top-6 flex h-[328px] w-[402px] flex-col border-x border-b border-[#bcc6d4] bg-[#f0f0f0]">
      <div className="flex h-[27px] shrink-0 items-center justify-between bg-[#2d80e2] pl-[7px] pr-2 text-white">
        提示信息
        <button aria-label="close">
          <svg width="9" height="9" viewBox="0 0 9 9" stroke="#fff" strokeWidth="2" aria-hidden="true"><path d="M1 1l7 7M8 1L1 8" /></svg>
        </button>
      </div>
      <div className="flex flex-1 flex-col items-end gap-[6px] px-[11px] pb-[11px] pt-[11px]">
        <textarea
          readOnly
          aria-label="message"
          defaultValue="C1512 位置非法,不能超出所在父图元的范围"
          className="w-full flex-1 resize-none border border-[#a9cde6] border-t-[#4a84b8] bg-white px-1 py-1 outline-none"
        />
        <button className="h-[23px] w-[75px] rounded-[3px] bg-[#2d80e2] pt-[2px] text-white">关闭</button>
      </div>
    </div>
  );
}

const snaps = [
  { icon: 'ortho', style: 'w-[25px] border-[#9a9b9e] bg-[#d0d1d4]' },
  { icon: 'snapRect', caret: true, style: 'w-9 border-[#2f8bea] bg-white' },
  { icon: 'cross', style: 'w-[25px] border-[#b5b6b9] bg-[#d0d1d4]' },
  { icon: 'angle', caret: true, style: 'w-9 border-[#9a9b9e] bg-[#d0d1d4]' },
  { icon: 'inputXY', caret: true, style: 'w-9 border-[#9a9b9e] bg-[#d0d1d4]' },
];

function StatusBar() {
  return (
    <footer className="flex h-7 shrink-0 items-center whitespace-nowrap bg-[#dedee0] pl-[2px] pr-[10px] pt-[2px] text-[#222]">
      <span className="w-[203px] shrink-0">X = 5250 Y = 10800</span>
      <span className="w-[83px] shrink-0">层高： 3.9</span>
      <span className="w-[133px] shrink-0">标高: -0.03~3.87</span>
      <span className="w-[103px] shrink-0">1(1)</span>
      <span className="w-20 shrink-0">隐藏： 0</span>
      <div className="flex gap-[3px]">
        {snaps.map((s) => (
          <button key={s.icon} aria-label={s.icon} className={clsx('flex h-[25px] items-center justify-center gap-1 border', s.style)}>
            <Icon name={s.icon} />
            {s.caret && <Caret />}
          </button>
        ))}
        <button className="h-[25px] border border-[#9a9b9e] bg-[#d0d1d4] px-[5px]">跨图层选择</button>
        <button className="h-[25px] border border-[#9a9b9e] bg-[#d0d1d4] px-[5px]">折线选择</button>
      </div>
      <span className="ml-1">鼠标左键指定插入点</span>
      <span className="ml-auto">71.4286 FPS</span>
    </footer>
  );
}

export default function App() {
  return (
    <div className="flex h-screen flex-col overflow-hidden bg-white font-['Noto_Sans','Noto_Sans_CJK_SC',sans-serif] text-[12px] leading-[18px] text-black">
      <Header />
      <Ribbon />
      <SelectorBar />
      <main className="relative flex min-h-0 flex-1 bg-white">
        <ElementTree />
        <div className="ml-1 flex w-[298px] shrink-0 flex-col gap-1">
          <ComponentList />
          <PropertyList />
        </div>
        <div className="flex w-1 shrink-0 items-center">
          <span className="mb-[-4px] h-[100px] w-[2px] bg-[#5f6876]" />
        </div>
        <Drawing />
        <MessageDialog />
      </main>
      <StatusBar />
    </div>
  );
}
